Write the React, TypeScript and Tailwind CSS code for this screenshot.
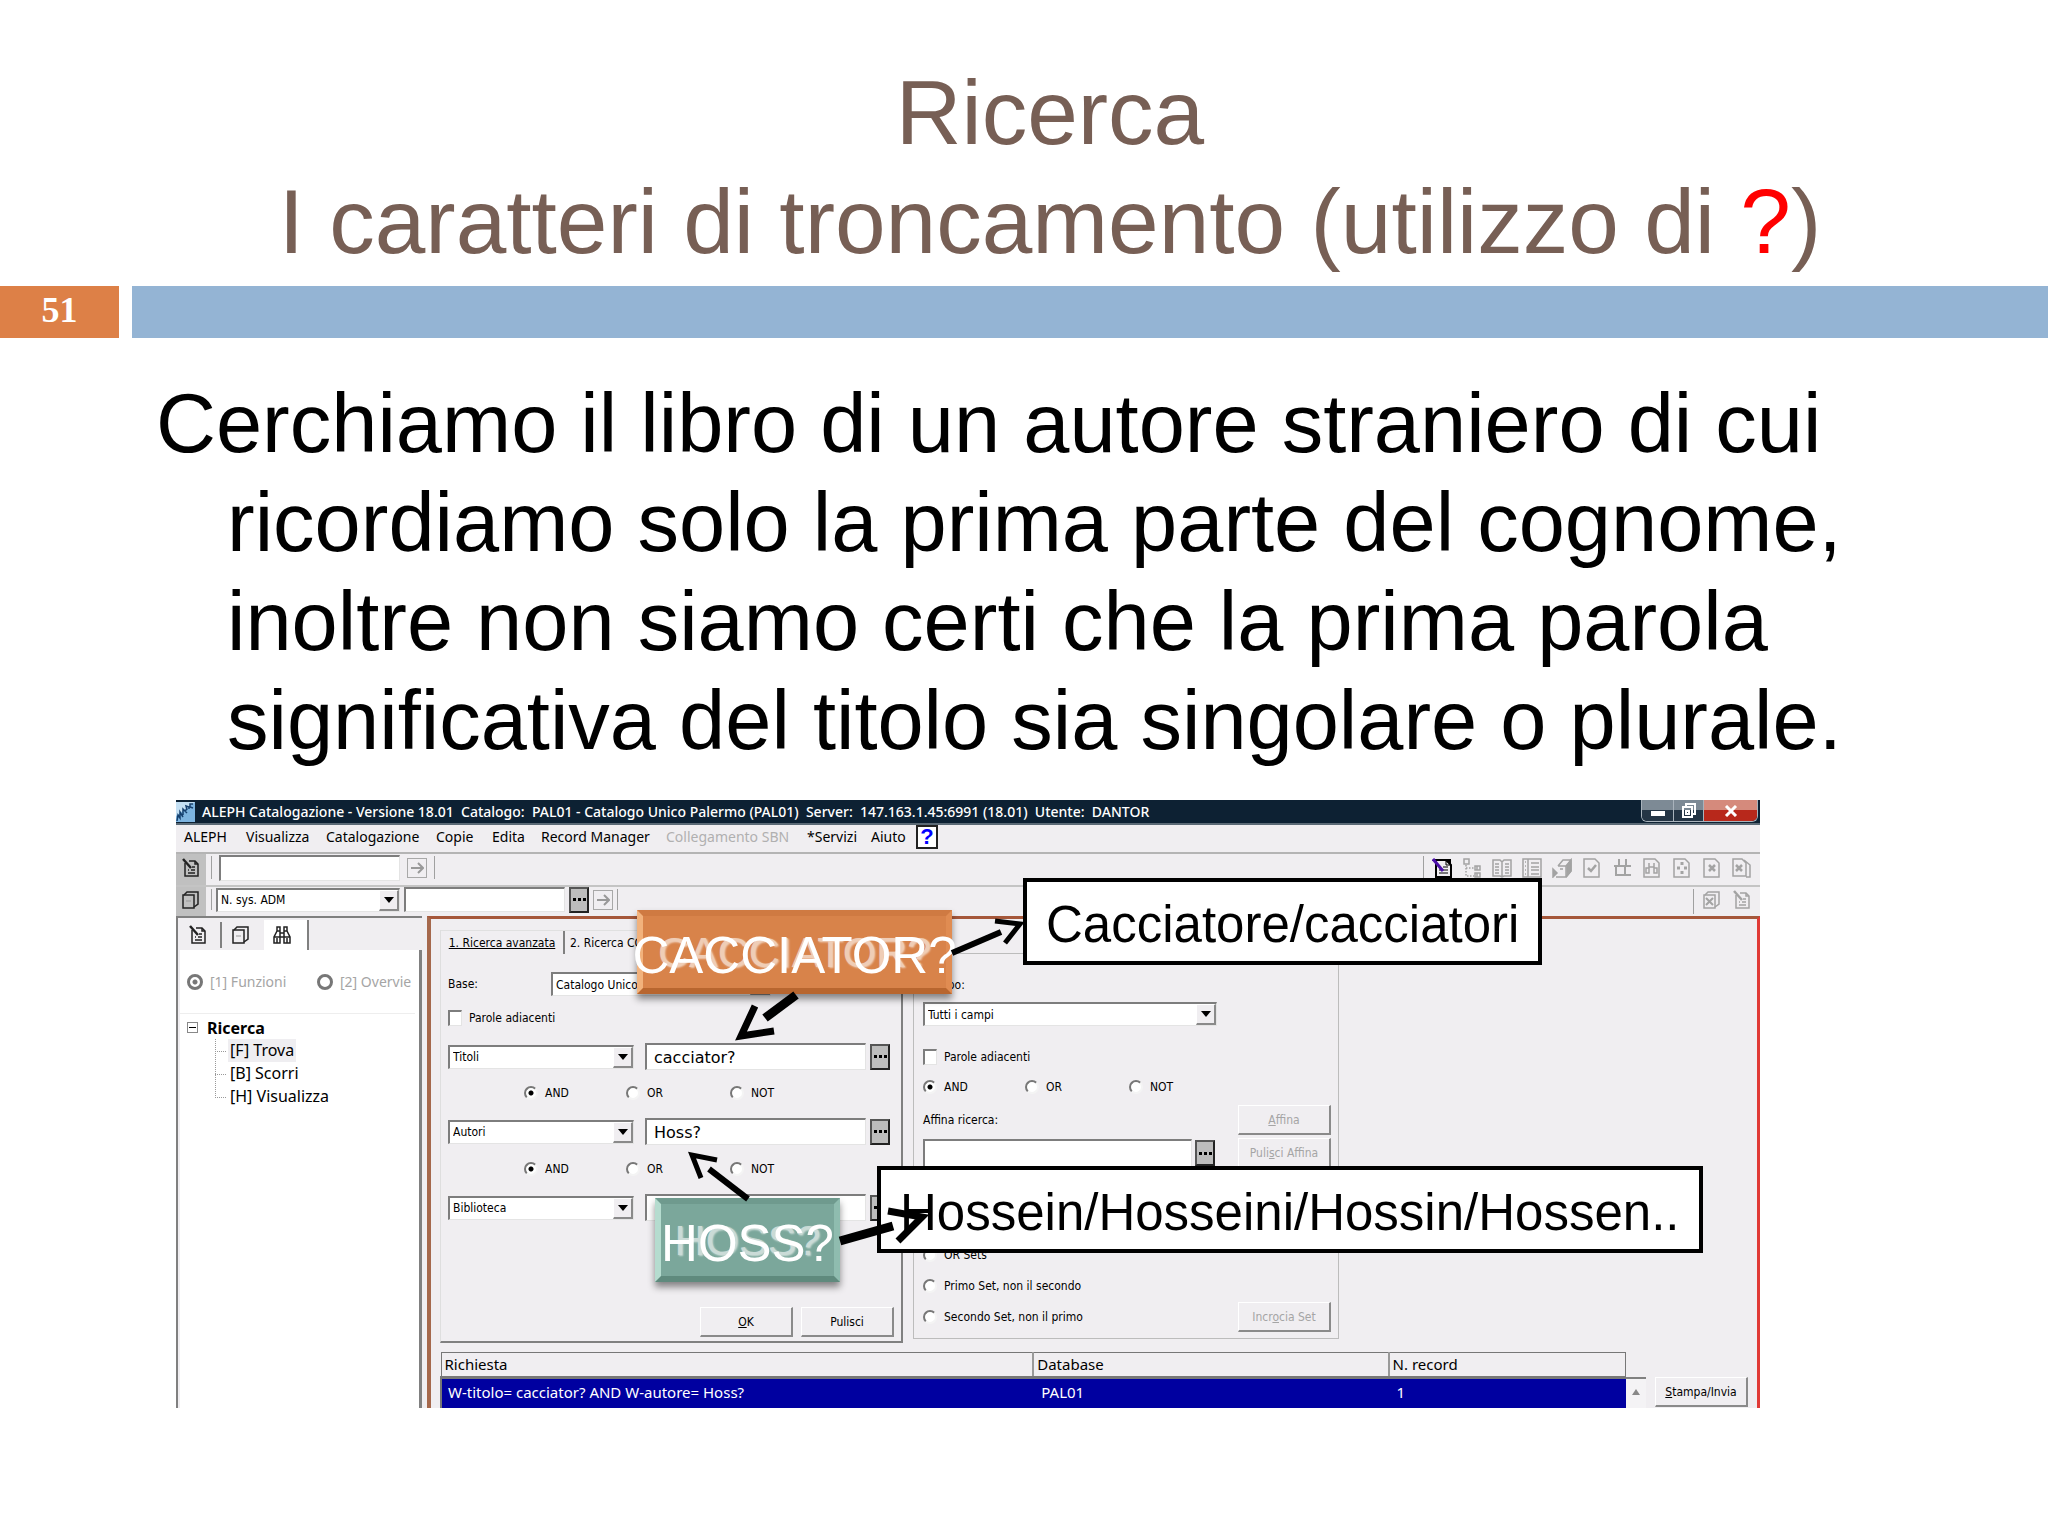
import { ReactNode, useState } from "react";

const raised =
  "bg-[#f0eef1] border-t border-l border-t-white border-l-white border-r-2 border-b-2 border-r-[#8a8a8a] border-b-[#8a8a8a]";
const sunken =
  "bg-white border-t-2 border-l-2 border-t-[#7d7d7d] border-l-[#7d7d7d] border-r border-b border-r-[#e4e4e4] border-b-[#e4e4e4]";

const Icon = ({
  children,
  color = "#a3a3a3",
  size = 20,
}: {
  children: ReactNode;
  color?: string;
  size?: number;
}) => (
  <svg
    width={size}
    height={size}
    viewBox="0 0 20 20"
    fill="none"
    stroke={color}
    strokeWidth="1.5"
    aria-hidden="true"
  >
    {children}
  </svg>
);

const NotePen = ({ color, pen }: { color?: string; pen?: string }) => (
  <Icon color={color}>
    <path d="M4 5v13h13V6l-3-3H8" />
    <path d="M14 3v3h3M7 15h7M10 12h4M11 9h3M7 12h1" />
    <path d="M2 1l8 9" stroke={pen || color || "#a3a3a3"} strokeWidth="2.5" />
  </Icon>
);

const Cards = ({ color, cross }: { color?: string; cross?: boolean }) => (
  <Icon color={color}>
    <path d="M2 5h11v13H2z" />
    <path d="M3 5l3-3h11v12l-4 3" />
    {cross ? (
      <path d="M4 8l7 7M11 8l-7 7" strokeWidth="2" />
    ) : (
      <path d="M5 11h5" strokeWidth="1" stroke="#999" />
    )}
  </Icon>
);

const Binoculars = ({ color }: { color?: string }) => (
  <Icon color={color}>
    <path d="M5 2h3v4H5zM12 2h3v4h-3zM5 6l-3 6v6h6v-6h4v6h6v-6l-3-6M8 6v6M12 6v6M8 8h4M2 12h6M12 12h6M5 13v5M15 13v5" />
  </Icon>
);

const page = "M2 1h11l4 4v14H2z";

const TOOLBAR_ICONS: { name: string; icon: ReactNode }[] = [
  {
    name: "Nuovo record",
    icon: (
      <Icon color="#000">
        <path d="M4 2h10l5 5v12H4z" strokeWidth="2" />
        <path d="M13 1l6 6V1z" fill="#000" stroke="none" />
        <path d="M14 2v5h5M7 12h9M7 15h9M11 9h5" strokeWidth="1" />
        <path d="M1 1l10 12" stroke="#4b0fa8" strokeWidth="3" />
      </Icon>
    ),
  },
  {
    name: "Albero",
    icon: (
      <Icon>
        <path d="M2 1h5v5H2zM13 8h5v4h-5zM13 15h5v4h-5zM15 8v4M15 15v4" />
        <path d="M4 7v11h8M4 10h8" strokeDasharray="1.5 1.5" />
      </Icon>
    ),
  },
  {
    name: "Libro",
    icon: (
      <Icon>
        <path d="M1 2h7l2 2 2-2h7v16h-7l-2 1-2-1H1zM10 4v15M3 6h4M3 9h4M3 12h4M3 15h4M13 6h4M13 9h4M13 12h4M13 15h4" />
      </Icon>
    ),
  },
  {
    name: "Elenco",
    icon: (
      <Icon>
        <path d="M1 1h18v18H1zM6 1v18M9 5h8M9 9h8M9 12h8M9 16h8M3 4h1M3 8h1M3 12h1M3 16h1" />
      </Icon>
    ),
  },
  {
    name: "Copia",
    icon: (
      <Icon>
        <path d="M6 8l5-6h8v11l-5 6H4M6 8h8v11M14 8l5-6M8 11h3" />
        <path d="M15 8l4-6v11l-4 5z" fill="#a3a3a3" />
        <path d="M1 11l4 4-4 4z" fill="#a3a3a3" />
      </Icon>
    ),
  },
  {
    name: "Controlla",
    icon: (
      <Icon>
        <path d={page} />
        <path d="M6 10l3 3 5-6" strokeWidth="2.5" />
      </Icon>
    ),
  },
  {
    name: "Campi",
    icon: (
      <Icon>
        <path d="M7 1v7M14 1v7M2 8h17M4 8v10M4 17h9V8M13 17h6" strokeWidth="2" />
      </Icon>
    ),
  },
  {
    name: "Cerca nel record",
    icon: (
      <Icon>
        <path d={page} />
        <path d="M7 5v9M12 5v9M7 9h5M4 10v5h3v-5zM12 10v5h3v-5z" />
      </Icon>
    ),
  },
  {
    name: "Espandi",
    icon: (
      <Icon>
        <path d={page} />
        <path d="M10 4v3M10 13v3M5 10h3M12 10h3" strokeWidth="3" />
      </Icon>
    ),
  },
  {
    name: "Chiudi record",
    icon: (
      <Icon>
        <path d={page} />
        <path d="M7 7l6 6M13 7l-6 6" strokeWidth="2.5" />
      </Icon>
    ),
  },
  {
    name: "Chiudi tutti",
    icon: (
      <Icon>
        <path d="M1 1h9l4 4v13H1zM12 2l6 5v12h-4" />
        <path d="M4 7l6 6M10 7l-6 6" strokeWidth="2.5" />
      </Icon>
    ),
  },
];

const Separator = () => (
  <span className="w-px self-stretch bg-[#a0a0a0] my-0.5"></span>
);

const GoButton = () => (
  <button
    aria-label="Vai"
    className="flex items-center justify-center w-5 h-5 border border-[#a8a8a8]"
  >
    <svg width="14" height="14" viewBox="0 0 14 14" fill="none" stroke="#999" strokeWidth="2">
      <path d="M1 7h11M8 2l5 5-5 5" />
    </svg>
  </button>
);

const MoreButton = ({ label }: { label: string }) => (
  <button
    aria-label={label}
    className="flex items-center justify-center gap-0.5 shrink-0 w-5 h-[26px] bg-[#bdbdbd] border-2 border-t-[#555] border-l-[#555] border-r-[#222] border-b-[#222]"
  >
    <i className="w-[3px] h-[3px] bg-black"></i>
    <i className="w-[3px] h-[3px] bg-black"></i>
    <i className="w-[3px] h-[3px] bg-black"></i>
  </button>
);

const SelectBox = ({
  label,
  value,
  className,
}: {
  label: string;
  value: string;
  className: string;
}) => (
  <div className={`flex h-6 shrink-0 ${sunken} ${className}`}>
    <select
      aria-label={label}
      className="appearance-none flex-1 min-w-0 bg-white pl-[3px] outline-none"
    >
      <option>{value}</option>
    </select>
    <span className={`pointer-events-none flex items-center justify-center w-5 ${raised}`}>
      <svg width="10" height="6" viewBox="0 0 10 6">
        <path d="M0 0h10L5 6z" />
      </svg>
    </span>
  </div>
);

const Radio = ({
  name,
  label,
  checked,
  className = "",
}: {
  name: string;
  label: string;
  checked?: boolean;
  className?: string;
}) => (
  <label className={`flex items-center gap-[7px] h-4 whitespace-nowrap ${className}`}>
    <input
      type="radio"
      name={name}
      defaultChecked={checked}
      className="appearance-none w-3.5 h-3.5 rounded-full bg-white border-2 border-t-[#777] border-l-[#777] border-r-[#f4f4f4] border-b-[#f4f4f4] checked:bg-[radial-gradient(circle,#000_0_2px,#fff_3px)]"
    />
    {label}
  </label>
);

const Check = ({ className }: { className: string }) => (
  <label className={`flex items-center gap-[7px] h-4 ${className}`}>
    <input type="checkbox" className={`appearance-none w-3.5 h-4 ${sunken}`} />
    Parole adiacenti
  </label>
);

const PushButton = ({
  children,
  disabled,
}: {
  children: ReactNode;
  disabled?: boolean;
}) => (
  <button
    disabled={disabled}
    className={`w-[93px] h-[30px] shrink-0 disabled:text-[#a5a5a5] ${raised}`}
  >
    {children}
  </button>
);

const SearchRow = ({ field, initial }: { field: string; initial: string }) => {
  const [term, setTerm] = useState<string>(initial);

  return (
    <div className="flex items-center mt-[17px]">
      <SelectBox label="Campo di ricerca" value={field} className="w-[186px]" />
      <input
        aria-label={`Termine per ${field}`}
        value={term}
        onChange={(e) => setTerm(e.target.value)}
        className={`ml-[11px] mr-1 w-[221px] h-[27px] pl-[7px] outline-none text-[16px] font-['DejaVu_Sans',sans-serif] ${sunken}`}
      />
      <MoreButton label={`Scorri ${field}`} />
    </div>
  );
};

const Operators = ({ name, className }: { name: string; className: string }) => (
  <div className={`flex h-4 ${className}`}>
    <Radio name={name} label="AND" checked className="w-[102px]" />
    <Radio name={name} label="OR" className="w-[104px]" />
    <Radio name={name} label="NOT" />
  </div>
);

const TitleBar = () => (
  <div className="flex h-[25px] bg-[#0d2133] border-b-2 border-[#5b6a76] text-white text-[14px] font-medium font-['Noto_Sans',sans-serif]">
    <svg width="19" height="20" viewBox="0 0 19 20" className="mt-0.5" aria-hidden="true">
      <rect width="19" height="20" fill="#7db4e0" />
      <path d="M0 0h19L0 14z" fill="#c4e0f4" />
      <path d="M1 19l1-6 2 3 0-6 3 5M7 13l0-6 4 4M9 9l2-2M11 8l-1-4 3 1 0 2M17 2l-3 0 0 3 3 1" fill="none" stroke="#16406e" strokeWidth="1.5" />
    </svg>
    <div className="flex-1 ml-[7px] whitespace-pre leading-[23px]">
      ALEPH Catalogazione - Versione 18.01{"  "}Catalogo:{"  "}PAL01 - Catalogo
      Unico Palermo (PAL01){"  "}Server:{"  "}147.163.1.45:6991 (18.01){"  "}
      Utente:{"  "}DANTOR
    </div>
    <div className="flex h-[22px] mr-0.5 border border-t-0 border-[#a9b3bc] rounded-b-md overflow-hidden">
      <button
        aria-label="Riduci"
        className="flex items-end justify-center w-8 pb-[5px] bg-linear-to-b from-[#7d8a95] from-50% to-[#243545] to-50% border-r border-[#a9b3bc]"
      >
        <i className="w-3.5 h-[5px] bg-white"></i>
      </button>
      <button
        aria-label="Ripristina"
        className="flex items-center justify-center w-[30px] bg-linear-to-b from-[#7d8a95] from-50% to-[#243545] to-50% border-r border-[#a9b3bc]"
      >
        <svg width="14" height="16" viewBox="0 0 14 16" fill="none" stroke="#fff" strokeWidth="2">
          <path d="M4 3V1h9v10h-2M1 4h9v10H1zM4 8h3v3H4z" />
        </svg>
      </button>
      <button
        aria-label="Chiudi"
        className="flex items-center justify-center w-[53px] bg-linear-to-b from-[#d58a7c] from-50% to-[#b8281b] to-50%"
      >
        <svg width="14" height="12" viewBox="0 0 14 12" fill="none" stroke="#fff" strokeWidth="3">
          <path d="M2 1l10 10M12 1L2 11" />
        </svg>
      </button>
    </div>
  </div>
);

const MenuBar = () => (
  <nav className="flex items-center h-[27px] pl-2 pb-1 text-[14px] whitespace-nowrap font-['Noto_Sans',sans-serif]">
    <button className="w-[62px] text-left">ALEPH</button>
    <button className="w-20 text-left">Visualizza</button>
    <button className="w-[110px] text-left">Catalogazione</button>
    <button className="w-14 text-left">Copie</button>
    <button className="w-[49px] text-left">Edita</button>
    <button className="w-[125px] text-left">Record Manager</button>
    <button disabled className="w-[141px] text-left text-[#b0b0b0]">
      Collegamento SBN
    </button>
    <button className="w-16 text-left">*Servizi</button>
    <button className="w-[45px] text-left">Aiuto</button>
    <button className="flex items-center justify-center w-[22px] h-6 bg-white border-2 border-[#222] text-[22px] leading-none font-bold text-[#0000ff] font-['Liberation_Sans',sans-serif]">
      ?
    </button>
  </nav>
);

const Toolbars = () => (
  <>
    <div className="flex items-center h-[33px] border-t-2 border-[#b4b4b4]">
      <button aria-label="Record" className="flex items-center justify-center w-[30px] h-full pb-1 bg-[#c0c0c0]">
        <NotePen color="#222" />
      </button>
      <div className="flex items-center flex-1 self-stretch gap-[7px] pl-[5px] pb-1">
        <Separator />
        <input aria-label="Numero di sistema" className={`w-[181px] h-[26px] ${sunken}`} />
        <GoButton />
        <Separator />
      </div>
      <Separator />
      <div className="flex items-center gap-[10px] pl-2 pr-2 pb-1">
        {TOOLBAR_ICONS.map(({ name, icon }) => (
          <button key={name} aria-label={name}>
            {icon}
          </button>
        ))}
      </div>
    </div>
    <div className="flex items-center h-[31px] border-t-2 border-[#c4c4c4]">
      <button aria-label="Copie" className="flex items-center justify-center w-[30px] h-full pb-1 bg-[#c0c0c0]">
        <Cards color="#222" />
      </button>
      <div className="flex items-center flex-1 self-stretch gap-1 pl-[5px] pb-1">
        <Separator />
        <SelectBox label="Tipo di ricerca" value="N. sys. ADM" className="w-[184px]" />
        <input aria-label="Valore" className={`w-[161px] h-[25px] ${sunken}`} />
        <MoreButton label="Elenco" />
        <GoButton />
        <Separator />
      </div>
      <Separator />
      <div className="flex items-center gap-[10px] pl-2 pr-2 pb-1">
        <button aria-label="Chiudi copie">
          <Cards cross />
        </button>
        <button aria-label="Modifica">
          <NotePen />
        </button>
      </div>
    </div>
  </>
);

const SidePanel = () => (
  <aside className="flex flex-col w-[246px] shrink-0 border-l-2 border-t-2 border-[#808080] pt-0.5 pl-0.5 font-['Noto_Sans',sans-serif]">
    <div className="flex h-[30px]">
      <button aria-label="Record" className="flex items-center justify-center w-[42px] my-0.5 pr-1 border-r-2 border-[#808080]">
        <NotePen color="#222" />
      </button>
      <button aria-label="Copie" className="flex items-center justify-center w-[42px] pr-1">
        <Cards color="#222" />
      </button>
      <button aria-label="Ricerca" className="flex items-center justify-center w-[45px] pr-2 bg-white border-r-2 border-[#808080]">
        <Binoculars color="#222" />
      </button>
    </div>
    <div className="flex-1 bg-white border-r-[3px] border-[#808080]">
      <div className="flex h-16 mr-1 items-center pl-[7px] text-[14px] text-[#a5a5a5] border-b border-[#eee] whitespace-nowrap overflow-hidden">
        <label className="flex items-center gap-[7px] w-[130px]">
          <input
            type="radio"
            name="vista"
            defaultChecked
            className="appearance-none w-4 h-4 rounded-full border-[3px] border-[#777] checked:bg-[radial-gradient(circle,#777_0_2px,#fff_3px)]"
          />
          [1] Funzioni
        </label>
        <label className="flex items-center gap-[7px]">
          <input type="radio" name="vista" className="appearance-none w-4 h-4 rounded-full border-[3px] border-[#777]" />
          [2] Overvie
        </label>
      </div>
      <div className="flex items-center h-[23px] mt-0.5 pl-[7px] text-[16px] font-bold">
        <button aria-label="Comprimi" className="flex items-center justify-center w-[11px] h-[11px] mr-[9px] border border-[#888]">
          <i className="w-[7px] h-px bg-black"></i>
        </button>
        Ricerca
      </div>
      <ul className="relative text-[16px] leading-[23px] pl-12">
        <svg width="14" height="60" className="absolute left-[35px] top-0" fill="none" stroke="#999" strokeDasharray="1 1">
          <path d="M.5 0v58M0 12.500h12M0 35.500h12M0 58.500h12" />
        </svg>
        <li>
          <button className="px-0.5 bg-[#efeef1]">[F] Trova</button>
        </li>
        <li>
          <button className="px-0.5">[B] Scorri</button>
        </li>
        <li>
          <button className="px-0.5">[H] Visualizza</button>
        </li>
      </ul>
    </div>
  </aside>
);

const AdvancedSearch = () => (
  <section className="w-[463px] mt-[11px] border-l border-l-[#dedede] border-r-2 border-r-[#808080] border-b-2 border-b-[#808080] pl-[7px] pb-1">
    <div className="flex items-center h-6 -ml-[7px] border-t border-[#e0e0e0]">
      <button className="w-[124px] h-full border-r-2 border-[#808080] underline">
        1. Ricerca avanzata
      </button>
      <button className="px-[5px]">2. Ricerca CCL</button>
    </div>
    <div className="flex items-center mt-[18px]">
      <label className="w-[103px]">Base:</label>
      <SelectBox label="Base" value="Catalogo Unico Palermo" className="w-[220px]" />
    </div>
    <Check className="mt-3.5" />
    <SearchRow field="Titoli" initial="cacciator?" />
    <Operators name="op1" className="mt-[15px] pl-[76px]" />
    <SearchRow field="Autori" initial="Hoss?" />
    <Operators name="op2" className="mt-4 pl-[76px]" />
    <SearchRow field="Biblioteca" initial="" />
    <div className="flex justify-end gap-2 mt-[86px] pr-[7px]">
      <PushButton>
        <u>O</u>K
      </PushButton>
      <PushButton>Pulisci</PushButton>
    </div>
  </section>
);

const RefineSearch = () => (
  <section className="w-[426px] mt-[34px] mb-1 border border-[#bcbcbc] pl-[9px] pr-[7px]">
    <div className="mt-[23px] h-4 leading-4">Campo:</div>
    <SelectBox label="Campo" value="Tutti i campi" className="w-[294px] mt-[9px]" />
    <Check className="mt-[23px]" />
    <Operators name="op3" className="mt-3.5" />
    <div className="flex items-center justify-between mt-2.5">
      <label htmlFor="affina">Affina ricerca:</label>
      <PushButton disabled>
        <u>A</u>ffina
      </PushButton>
    </div>
    <div className="flex items-center mt-[3px]">
      <input id="affina" className={`w-[269px] h-7 mr-[3px] ${sunken}`} />
      <MoreButton label="Elenco affina" />
      <span className="flex-1"></span>
      <PushButton disabled>
        Puli<u>s</u>ci Affina
      </PushButton>
    </div>
    <Radio name="sets" label="OR Sets" className="mt-[79px]" />
    <Radio name="sets" label="Primo Set, non il secondo" className="mt-[15px]" />
    <div className="flex items-center justify-between mt-2">
      <Radio name="sets" label="Secondo Set, non il primo" />
      <PushButton disabled>
        Incr<u>o</u>cia Set
      </PushButton>
    </div>
  </section>
);

const Results = () => (
  <div className="flex mt-[9px] pr-[9px] text-[15px] font-['Noto_Sans',sans-serif]">
    <table className="flex-1 table-fixed border-collapse text-left">
      <thead>
        <tr className="h-[25px] border border-b-[3px] border-[#777]">
          <th className="w-1/2 pl-[3px] pb-0.5 font-normal leading-5 border-r-2 border-[#999]">Richiesta</th>
          <th className="w-[30%] pl-[3px] pb-0.5 font-normal leading-5 border-r-2 border-[#999]">Database</th>
          <th className="w-1/5 pl-[3px] pb-0.5 font-normal leading-5">N. record</th>
        </tr>
      </thead>
      <tbody>
        <tr className="h-[27px] bg-[#0000a0] text-white border-l-2 border-[#777]">
          <td className="pl-1.5 pb-1 leading-5">W-titolo= cacciator? AND W-autore= Hoss?</td>
          <td className="pl-2 pb-1 leading-5">PAL01</td>
          <td className="pl-2 pb-1 leading-5">1</td>
        </tr>
      </tbody>
    </table>
    <div className="flex justify-center w-5 h-[31px] mt-[25px] mr-[9px] pt-2.5 border-t-2 border-[#808080] bg-[#f4f3f5]">
      <svg width="8" height="6" viewBox="0 0 8 6">
        <path d="M0 6h8L4 0z" fill="#888" />
      </svg>
    </div>
    <div className="mt-[25px] text-[12px] font-['DejaVu_Sans_Condensed','DejaVu_Sans',sans-serif]">
      <PushButton>
        <u>S</u>tampa/Invia
      </PushButton>
    </div>
  </div>
);

const Callout = ({ text, className }: { text: string; className: string }) => (
  <div
    className={`absolute flex items-center justify-center h-[84px] border-[6px] shadow-[0_5px_7px_rgba(0,0,0,0.45)] text-white whitespace-nowrap leading-none ${className}`}
  >
    <span
      aria-hidden="true"
      className="absolute text-[43px] opacity-60 text-shadow-[1px_1px_2px_#fff]"
    >
      {text}
    </span>
    <span className="relative text-[51px] pt-1.5">{text}</span>
  </div>
);

const Arrows = () => (
  <svg
    width="800"
    height="460"
    viewBox="176 800 800 460"
    className="absolute left-0 top-0 overflow-visible pointer-events-none"
    fill="none"
    stroke="#000"
    aria-hidden="true"
  >
    <path d="M952 953L1001 932" strokeWidth="6" />
    <path d="M995 921L1020 924L1005 943" strokeWidth="5" />
    <path d="M796 995L765 1018" strokeWidth="9" />
    <path d="M755 1006L741 1036L774 1031" strokeWidth="7" />
    <path d="M748 1199L709 1169" strokeWidth="6" />
    <path d="M717 1160L692 1155L701 1178" strokeWidth="5" />
    <path d="M840 1241L893 1226" strokeWidth="9" />
    <path d="M888 1211L922 1217L898 1241" strokeWidth="7" />
  </svg>
);

const CatalogWindow = () => (
  <div className="relative mt-[30px] ml-44 mr-72 text-black font-['DejaVu_Sans_Condensed','DejaVu_Sans',sans-serif]">
    <div className="overflow-hidden bg-[#f0eef1] text-[12px]">
      <TitleBar />
      <MenuBar />
      <Toolbars />
      <div className="flex h-[492px]">
        <SidePanel />
        <main className="flex-1 min-w-0 ml-[5px] pl-[9px] border-l-4 border-l-[#a5684c] border-t-[3px] border-t-[#a5573a] border-r-[3px] border-r-[#e03a36]">
          <div className="flex gap-[10px]">
            <AdvancedSearch />
            <RefineSearch />
          </div>
          <Results />
        </main>
      </div>
    </div>
    <div className="font-['Liberation_Sans',Arial,sans-serif]">
      <Callout
        text="CACCIATOR?"
        className="left-[461px] top-[110px] w-[315px] bg-[#d8834a] border-t-[#cf7a42] border-l-[#f2b27c] border-r-[#e08c52] border-b-[#b8662f]"
      />
      <Callout
        text="HOSS?"
        className="left-[479px] top-[398px] w-[185px] bg-[#7ba79b] border-t-[#6f9a8e] border-l-[#b5dccf] border-r-[#8fbcaf] border-b-[#5f8a7d]"
      />
      <div className="absolute left-[847px] top-[78px] px-[19px] pt-1.5 bg-white border-4 border-black text-[51px] leading-[73px] whitespace-nowrap">
        Cacciatore/cacciatori
      </div>
      <div className="absolute left-[701px] top-[366px] px-[19px] pt-1.5 bg-white border-4 border-black text-[51px] leading-[73px] whitespace-nowrap">
        Hossein/Hosseini/Hossin/Hossen..
      </div>
    </div>
    <Arrows />
  </div>
);

export default function App() {
  return (
    <div className="min-h-screen bg-white font-['Liberation_Sans',Arial,sans-serif]">
      <h1 className="pt-[58px] pl-[52px] text-center text-[91px] leading-[109px] text-[#775f55]">
        Ricerca
        <br />I caratteri di troncamento (utilizzo di{" "}
        <span className="text-[#ff0000]">?</span>)
      </h1>
      <div className="flex gap-[13px] h-[52px] mt-2.5">
        <div className="w-[119px] bg-[#dd8047] text-center text-[36px] leading-[48px] font-bold text-white font-['Liberation_Serif',serif]">
          51
        </div>
        <div className="flex-1 bg-[#94b4d4]"></div>
      </div>
      <p className="mt-9 pl-[227px] pr-[180px] -indent-[71px] text-[83px] leading-[99px] text-black">
        Cerchiamo il libro di un autore straniero di cui ricordiamo solo la prima
        parte del cognome, inoltre non siamo certi che la prima parola
        significativa del titolo sia singolare o plurale.
      </p>
      <CatalogWindow />
    </div>
  );
}
